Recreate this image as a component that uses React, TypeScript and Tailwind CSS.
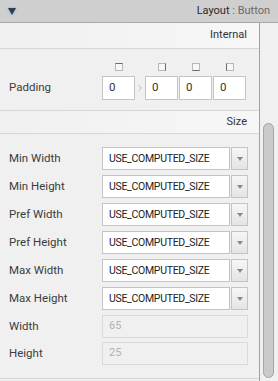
import { ChevronRight } from "lucide-react";

const font = { fontFamily: 'Roboto, "Noto Sans", sans-serif' };

const Side = ({ side }: { side: "t" | "r" | "b" | "l" }) => {
  const dark =
    side === "t"
      ? "border-t-[#6a6a6a]"
      : side === "r"
      ? "border-r-[#6a6a6a]"
      : side === "b"
      ? "border-b-[#6a6a6a]"
      : "border-l-[#6a6a6a]";
  return <div className={`w-[8px] h-[8px] border border-[#b8b8b8] bg-[#f7f7f7] ${dark}`} />;
};

const PadBox = () => (
  <div className="w-[33px] h-[24px] bg-white border border-[#c4c4c4] flex items-center pl-[6px] text-[11.5px] text-[#333]">
    0
  </div>
);

const Combo = () => (
  <div className="flex h-[23px] w-[146px]">
    <div className="flex-1 min-w-0 overflow-hidden whitespace-nowrap bg-white border border-[#c4c4c4] flex items-center pl-[6px] text-[10.5px] tracking-[-0.3px] text-[#222]">
      USE_COMPUTED_SIZE
    </div>
    <div className="w-[17px] shrink-0 ml-[1px] border border-[#c4c4c4] bg-gradient-to-b from-[#f6f6f6] to-[#e4e4e4] flex items-center justify-center">
      <div className="w-0 h-0 border-l-[3.5px] border-r-[3.5px] border-t-[4px] border-l-transparent border-r-transparent border-t-[#8a8a8a]" />
    </div>
  </div>
);

const Disabled = ({ v }: { v: string }) => (
  <div className="w-[146px] h-[23px] bg-[#f0f0f0] border border-[#dadada] flex items-center pl-[6px] text-[11px] text-[#b0b0b0]">
    {v}
  </div>
);

const Row = ({ label, children }: { label: string; children: React.ReactNode }) => (
  <div className="flex items-center h-[23px]">
    <div className="w-[102px] pl-[9px] text-[11.5px] text-[#3c3c3c]">{label}</div>
    {children}
  </div>
);

const App = () => {
  const sizes = ["Min Width", "Min Height", "Pref Width", "Pref Height", "Max Width", "Max Height"];
  return (
    <div className="w-[278px] h-[381px] bg-[#f0f0f0] flex flex-col overflow-hidden" style={font}>
      <div className="h-[23px] shrink-0 bg-[#cfcfcf] border-b border-[#a8a8a8] flex items-center justify-between pl-[8px] pr-[8px]">
        <div className="w-0 h-0 border-l-[4px] border-r-[4px] border-t-[7px] border-l-transparent border-r-transparent border-t-[#2f3f4f] drop-shadow-[0_0_1px_#6ab0e0]" />
        <div className="text-[11px]">
          <span className="text-[#2a2a2a]">Layout</span>
          <span className="text-[#6a6a6a]"> : Button</span>
        </div>
      </div>
      <div className="flex flex-1">
        <div className="w-[260px] border-r border-[#a0a0a0] flex flex-col">
          <div className="h-[26px] border-b border-[#d6d6d6] bg-gradient-to-r from-[#f0f0f0] to-[#f7f7f7] flex items-center justify-end pr-[12px] text-[11px] text-[#333]">
            Internal
          </div>
          <div className="h-[62px] border-b border-[#d6d6d6] flex items-end pb-[10px]">
            <div className="w-[102px] pl-[9px] text-[11.5px] text-[#3c3c3c] h-[24px] flex items-center">Padding</div>
            <div className="flex flex-col gap-[5px]">
              <div className="flex items-center">
                <div className="w-[33px] flex justify-center"><Side side="t" /></div>
                <div className="w-[10px]" />
                <div className="w-[33px] flex justify-center"><Side side="r" /></div>
                <div className="w-[35px] flex justify-center"><Side side="b" /></div>
                <div className="w-[34px] flex justify-center"><Side side="l" /></div>
              </div>
              <div className="flex items-center">
                <PadBox />
                <div className="w-[10px] flex justify-center text-[#999]">
                  <ChevronRight size={10} strokeWidth={1.5} />
                </div>
                <PadBox />
                <div className="w-[1px]" />
                <PadBox />
                <div className="w-[1px]" />
                <PadBox />
              </div>
            </div>
          </div>
          <div className="h-[23px] border-b border-[#d6d6d6] bg-gradient-to-r from-[#f0f0f0] to-[#f7f7f7] flex items-center justify-end pr-[12px] text-[11px] text-[#333]">
            Size
          </div>
          <div className="flex flex-col gap-[5px] pt-[13px] flex-1 border-b border-[#d6d6d6]">
            {sizes.map((s) => (
              <Row key={s} label={s}>
                <Combo />
              </Row>
            ))}
            <Row label="Width">
              <Disabled v="65" />
            </Row>
            <div className="-mt-[1px]">
              <Row label="Height">
                <Disabled v="25" />
              </Row>
            </div>
          </div>
          <div className="h-[2px]" />
        </div>
        <div className="flex-1 pl-[3px] pr-[3px] pt-[100px] pb-[3px] flex">
          <div className="w-[11px] h-full rounded-full bg-[#cacaca] border border-[#a4a4a4]" />
        </div>
      </div>
    </div>
  );
};

export default App;
